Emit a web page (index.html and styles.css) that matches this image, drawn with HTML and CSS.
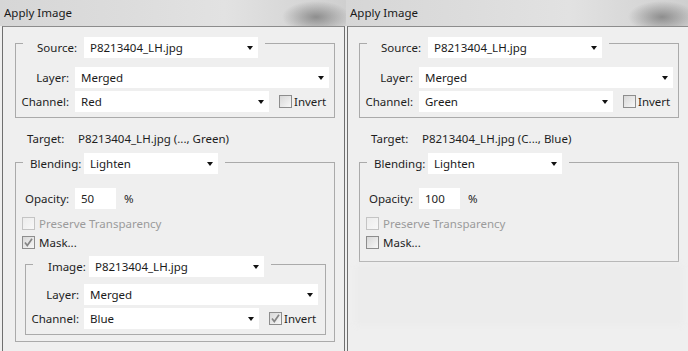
FILE: index.html
```html
<!DOCTYPE html>
<html lang="en">
<head>
    <meta charset="UTF-8">
    <title>Apply Image</title>
    <link rel="stylesheet" href="styles.css">
</head>
<body>
<div class="screen">

    <!-- first dialog: mask on -->
    <div class="panel">
        <div class="titlebar">Apply Image</div>
        <div class="body">
            <div class="group source">
                <div class="group-head">
                    <span class="head-lbl">Source:</span>
                    <div class="select w174">P8213404_LH.jpg</div>
                </div>
                <div class="row row-first">
                    <span class="lbl">Layer:</span>
                    <div class="select grow">Merged</div>
                </div>
                <div class="row">
                    <span class="lbl">Channel:</span>
                    <div class="select w194">Red</div>
                    <span class="check"><span class="box"></span>Invert</span>
                </div>
            </div>

            <div class="target">
                <span class="target-lbl">Target:</span>
                <span>P8213404_LH.jpg (..., Green)</span>
            </div>

            <div class="group blend">
                <div class="group-head">
                    <span class="blend-lbl">Blending:</span>
                    <div class="select w134">Lighten</div>
                </div>
                <div class="opacity">
                    <span class="opacity-lbl">Opacity:</span>
                    <div class="field">50</div>
                    <span class="pct">%</span>
                </div>
                <div class="option disabled"><span class="box"></span>Preserve Transparency</div>
                <div class="option mask"><span class="box checked"><svg viewBox="0 0 11 11"><path d="M2 5.5 L4.3 8.5 L9 1.8" /></svg></span>Mask...</div>

                <div class="group inner">
                    <div class="group-head">
                        <span class="image-lbl">Image:</span>
                        <div class="select w175">P8213404_LH.jpg</div>
                    </div>
                    <div class="row row-first">
                        <span class="lbl">Layer:</span>
                        <div class="select grow">Merged</div>
                    </div>
                    <div class="row">
                        <span class="lbl">Channel:</span>
                        <div class="select w175">Blue</div>
                        <span class="check"><span class="box checked"><svg viewBox="0 0 11 11"><path d="M2 5.5 L4.3 8.5 L9 1.8" /></svg></span>Invert</span>
                    </div>
                </div>
            </div>
        </div>
    </div>

    <!-- second dialog: mask off -->
    <div class="panel second">
        <div class="titlebar">Apply Image</div>
        <div class="body">
            <div class="group source">
                <div class="group-head">
                    <span class="head-lbl">Source:</span>
                    <div class="select w174">P8213404_LH.jpg</div>
                </div>
                <div class="row row-first">
                    <span class="lbl">Layer:</span>
                    <div class="select grow">Merged</div>
                </div>
                <div class="row">
                    <span class="lbl">Channel:</span>
                    <div class="select w194">Green</div>
                    <span class="check"><span class="box"></span>Invert</span>
                </div>
            </div>

            <div class="target">
                <span class="target-lbl">Target:</span>
                <span>P8213404_LH.jpg (C..., Blue)</span>
            </div>

            <div class="group blend closed">
                <div class="group-head">
                    <span class="blend-lbl">Blending:</span>
                    <div class="select w134">Lighten</div>
                </div>
                <div class="opacity">
                    <span class="opacity-lbl">Opacity:</span>
                    <div class="field">100</div>
                    <span class="pct">%</span>
                </div>
                <div class="option disabled"><span class="box"></span>Preserve Transparency</div>
                <div class="option mask"><span class="box"></span>Mask...</div>
            </div>

            <div class="ghost"></div>
        </div>
    </div>

</div>
</body>
</html>
```

FILE: styles.css
```css
* {
    box-sizing: border-box;
}

body {
    margin: 0;
    font-family: "Noto Sans", "Open Sans", sans-serif;
    font-size: 11.5px;
    color: #1e1e1e;
    background-color: #efefef;
}

.screen {
    display: flex;
    width: 688px;
    height: 351px;
    overflow: hidden;
}

.panel {
    width: 346px;
    display: flex;
    flex-direction: column;
    flex-shrink: 0;
}

.panel.second {
    width: 342px;
}

.titlebar {
    height: 26px;
    line-height: 25px;
    padding-left: 4px;
    color: #1a1a1a;
    background:
        radial-gradient(ellipse 34px 16px at 316px 17px, rgba(95, 95, 95, 0.6), rgba(130, 130, 130, 0) 100%),
        linear-gradient(90deg, #d6d6d6 0%, #dcdcdc 35%, #e2e2e2 65%, #cfcfcf 100%);
}

.body {
    flex: 1;
    margin-left: 2px;
    margin-right: 1px;
    padding-left: 12px;
    border-top: 1px solid #8c8c8c;
    border-left: 1px solid #6f6f6f;
    border-right: 1px solid #6f6f6f;
    background-color: #efefef;
}

.second .body {
    margin-left: 1px;
    margin-right: 0;
    padding-left: 11px;
    border-right: none;
}

/* group boxes */
.group {
    border: 1px solid #aaaaaa;
    width: 320px;
}

.group-head {
    display: flex;
    align-items: center;
    width: fit-content;
    margin-left: 7px;
    padding: 0 7px 0 14px;
    background-color: #efefef;
}

.source {
    margin-top: 16px;
    padding-bottom: 5px;
}

.source .group-head {
    margin-top: -7px;
}

.head-lbl {
    width: 47px;
}

.select {
    position: relative;
    height: 21px;
    padding-left: 6px;
    display: flex;
    align-items: center;
    background-color: #fff;
    color: #1a1a1a;
}

.select::after {
    content: "";
    position: absolute;
    right: 5px;
    top: 9px;
    border-left: 3.5px solid transparent;
    border-right: 3.5px solid transparent;
    border-top: 4px solid #111;
}

.grow {
    flex: 1;
}

.w134 { width: 134px; }
.w174 { width: 174px; }
.w175 { width: 175px; }
.w194 { width: 194px; }

.row {
    display: flex;
    align-items: center;
    margin-top: 3px;
    padding-right: 5px;
}

.row-first {
    margin-top: 9px;
}

.lbl {
    width: 53px;
    margin-right: 6px;
    text-align: right;
}

.check {
    display: flex;
    align-items: center;
    margin-left: 10px;
}

.box {
    width: 13px;
    height: 13px;
    margin-right: 2px;
    border: 1px solid #8d8d8d;
    background: linear-gradient(135deg, #d8d8d8, #f7f7f7);
    display: flex;
    align-items: center;
    justify-content: center;
}

.box svg {
    width: 11px;
    height: 11px;
}

.box path {
    fill: none;
    stroke: #858585;
    stroke-width: 1.7;
}

/* target line */
.target {
    display: flex;
    align-items: center;
    height: 16px;
    margin-top: 12px;
    padding-left: 12px;
}

.target-lbl {
    width: 51px;
}

/* blending group */
.blend {
    margin-top: 16px;
}

.blend > .group-head {
    margin-top: -10px;
    padding-left: 7px;
}

.blend-lbl {
    width: 54px;
}

.opacity {
    display: flex;
    align-items: center;
    margin-top: 14px;
    padding-left: 9px;
}

.opacity-lbl {
    width: 50px;
}

.field {
    width: 41px;
    height: 21px;
    padding-left: 6px;
    display: flex;
    align-items: center;
    background-color: #fff;
}

.pct {
    margin-left: 8px;
}

.option {
    display: flex;
    align-items: center;
    height: 13px;
    margin-top: 8px;
    padding-left: 6px;
}

.option .box {
    margin-right: 4px;
}

.option.disabled {
    color: #9b9b9b;
}

.option.disabled .box {
    border-color: #c4c4c4;
    background: linear-gradient(135deg, #ececec, #f8f8f8);
}

.option.mask {
    margin-top: 6px;
}

.blend.closed {
    padding-bottom: 12px;
}

/* mask sub group */
.inner {
    width: auto;
    margin: 15px 8px 6px 9px;
    padding-bottom: 5px;
}

.inner .group-head {
    margin-top: -9px;
    padding-left: 15px;
}

.image-lbl {
    width: 41px;
}

.inner .row {
    padding-right: 7px;
}

.inner .row-first {
    margin-top: 7px;
}

.inner .lbl {
    margin-right: 5px;
}

.ghost {
    width: 320px;
    height: 54px;
    margin-top: 6px;
    background-color: #ececec;
    box-shadow: 0 0 6px 4px #ececec;
}
```
